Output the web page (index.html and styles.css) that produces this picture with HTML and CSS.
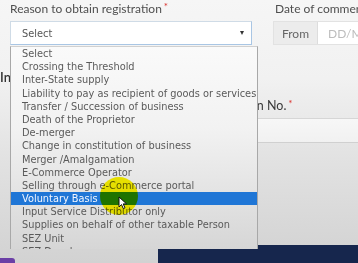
FILE: index.html
```html
<!DOCTYPE html>
<html lang="en">
<head>
  <meta charset="UTF-8" />
  <meta name="viewport" content="width=device-width, initial-scale=1" />
  <title>New Registration - Business Details</title>
  <link rel="stylesheet" href="styles.css">
</head>
<body>
  <div class="page">
    <div class="row top-row">
      <div class="field reason">
        <label class="lbl">Reason to obtain registration<span class="req">*</span></label>
        <div class="select focused">
          <span>Select</span>
          <span class="caret"></span>
        </div>
        <ul class="options">
          <li>Select</li>
          <li>Crossing the Threshold</li>
          <li>Inter-State supply</li>
          <li>Liability to pay as recipient of goods or services</li>
          <li>Transfer / Succession of business</li>
          <li>Death of the Proprietor</li>
          <li>De-merger</li>
          <li>Change in constitution of business</li>
          <li>Merger /Amalgamation</li>
          <li>E-Commerce Operator</li>
          <li>Selling through e-Commerce portal</li>
          <li class="active">Voluntary Basis</li>
          <li>Input Service Distributor only</li>
          <li>Supplies on behalf of other taxable Person</li>
          <li>SEZ Unit</li>
          <li>SEZ Developer</li>
          <li>Others</li>
        </ul>
      </div>
      <div class="field">
        <label class="lbl date-lbl">Date of commencement of Business<span class="req">*</span></label>
        <div class="datebox">
          <span class="addon">From</span>
          <span class="ph">DD/MM/YYYY</span>
        </div>
      </div>
    </div>

    <h3 class="section">Indicate Existing Registrations</h3>

    <div class="row second-row">
      <div class="field">
        <label class="lbl">Type of Registration</label>
        <div class="input"></div>
      </div>
      <div class="field">
        <label class="lbl dark">Registration No.<span class="req">*</span></label>
        <div class="input"></div>
      </div>
    </div>

    <div class="footer">
      <span class="btn-back"></span>
      <span class="btn-save">SAVE &amp; CONTINUE</span>
    </div>

    <!-- click highlight + pointer from the recording -->
    <span class="click-mark"></span>
    <svg class="pointer" width="10" height="14" viewBox="0 0 10 14">
      <path d="M1 1 L1 11 L3.5 8.6 L5.3 12.6 L7 11.8 L5.2 7.9 L8.6 7.9 Z" fill="#fff" stroke="#111" stroke-width="1" stroke-linejoin="round"/>
    </svg>
  </div>
</body>
</html>
```

FILE: styles.css
```css
html, body {
  margin: 0;
  padding: 0;
  height: 100%;
  overflow: hidden;
}
body {
  font-family: Lato, 'Open Sans', sans-serif;
  background: linear-gradient(180deg, #f6f6f6 0%, #f1f1f1 30%, #e2e2e2 60%, #d2d2d2 100%);
  color: #555;
}
.page {
  position: relative;
  width: 560px;
  padding: 1px 0 0 10px;
}
.row {
  display: grid;
}
.top-row {
  grid-template-columns: 242px 240px;
  column-gap: 21px;
}
.second-row {
  grid-template-columns: 176px 300px;
  column-gap: 12px;
  margin-top: 12px;
}
.field {
  display: flex;
  flex-direction: column;
}
.reason {
  position: relative;
}
.lbl {
  font-size: 12px;
  line-height: 16px;
  margin-bottom: 4px;
  color: #4f4f4f;
  white-space: nowrap;
}
.date-lbl {
  padding-left: 2px;
}
.lbl.dark {
  color: #3a3a3a;
  font-size: 12.5px;
}
.req {
  color: #d9302c;
  font-size: 10px;
  margin-left: 2px;
  position: relative;
  top: -3px;
}
.select {
  height: 24px;
  box-sizing: border-box;
  border: 1px solid #c9d4df;
  background: #fff;
  display: flex;
  align-items: center;
  justify-content: space-between;
  padding: 0 7px 0 11px;
  font-family: 'DejaVu Sans', Verdana, sans-serif;
  font-size: 9.8px;
  color: #555;
}
.select.focused {
  border-color: #cfdbe6 #a9c6e4 #a9c6e4 #cfdbe6;
}
.caret {
  width: 0;
  height: 0;
  border-left: 2.5px solid transparent;
  border-right: 2.5px solid transparent;
  border-top: 4px solid #333;
}
.options {
  position: absolute;
  top: 45px;
  left: 0;
  width: 248px;
  height: 203px;
  box-sizing: border-box;
  margin: 0;
  padding: 0;
  list-style: none;
  overflow: hidden;
  border: 1px solid #a8a8a8;
  border-top-color: #d0d0d0;
  border-bottom: none;
  background: linear-gradient(180deg, #fafafa 0%, #f2f2f2 40%, #e2e2e2 75%, #d6d6d6 100%);
  font-family: 'DejaVu Sans', Verdana, sans-serif;
  font-size: 9.8px;
  color: #5a5a5a;
  z-index: 2;
}
.options li {
  height: 13.2px;
  line-height: 13.2px;
  padding-left: 11px;
  white-space: nowrap;
}
.options li.active {
  background: #1f76d6;
  color: #f2f6ff;
}
.datebox {
  display: flex;
  height: 24px;
  box-sizing: border-box;
  border: 1px solid #e2e2e2;
  background: #fff;
  font-size: 12px;
}
.addon {
  width: 43px;
  background: #ececec;
  border-right: 1px solid #ddd;
  display: flex;
  align-items: center;
  justify-content: center;
  color: #666;
}
.ph {
  display: flex;
  align-items: center;
  padding-left: 10px;
  color: #bdbdbd;
}
.section {
  margin: 23px 0 0 -10px;
  font-size: 13px;
  line-height: 18px;
  font-weight: 600;
  color: #333;
}
.input {
  height: 25px;
  box-sizing: border-box;
  border-top: 1px solid #d6d6d6;
  border-bottom: 1px solid #d0d0d0;
  background: linear-gradient(180deg, #f7f7f7, #f1f1f1);
}
.footer {
  display: flex;
  align-items: flex-start;
  justify-content: space-between;
  margin: 102px 0 0 -10px;
  width: 520px;
}
.btn-back {
  margin-top: 13px;
  width: 15px;
  height: 14px;
  background: #6b3fa6;
  border-radius: 0 3px 0 0;
}
.btn-save {
  margin-right: 162px;
  width: 200px;
  height: 64px;
  background: #16264d;
  color: #fff;
  font-size: 12px;
  text-align: center;
  line-height: 64px;
}
.click-mark {
  position: absolute;
  left: 100px;
  top: 177px;
  width: 38px;
  height: 38px;
  border-radius: 50%;
  background: #fff800;
  mix-blend-mode: multiply;
  z-index: 3;
}
.pointer {
  position: absolute;
  left: 118px;
  top: 196px;
  z-index: 4;
}
```
